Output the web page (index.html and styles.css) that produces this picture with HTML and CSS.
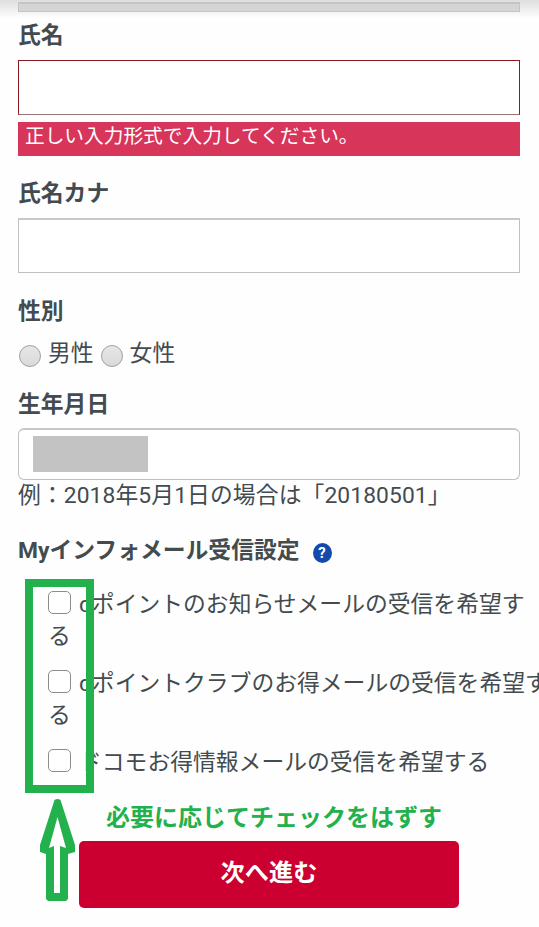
FILE: index.html
```html
<!DOCTYPE html>
<html lang="ja">
<head>
    <meta charset="UTF-8">
    <meta name="viewport" content="width=device-width, initial-scale=1.0">
    <title>お客様情報の入力</title>
    <link rel="stylesheet" href="styles.css">
</head>
<body>
    <div class="top-shade"><div class="top-bar"></div></div>
    <form class="container">
        <label class="title" for="name">氏名</label>
        <input type="text" id="name" class="text-box invalid">
        <div class="error">正しい入力形式で入力してください。</div>

        <label class="title title-kana" for="kana">氏名カナ</label>
        <input type="text" id="kana" class="text-box">

        <div class="title title-gender">性別</div>
        <div class="radios">
            <input type="radio" name="gender" id="male">
            <label for="male">男性</label>
            <input type="radio" name="gender" id="female">
            <label for="female">女性</label>
        </div>

        <div class="title title-birth">生年月日</div>
        <div class="text-box birth-box"><span class="mask"></span></div>
        <div class="hint">例：2018年5月1日の場合は「20180501」</div>

        <div class="title title-mail">
            <span>Myインフォメール受信設定</span>
            <span class="help">?</span>
        </div>
        <div class="mail-list">
            <label class="mail-item"><input type="checkbox">dポイントのお知らせメールの受信を希望す<br>る</label>
            <label class="mail-item"><input type="checkbox">dポイントクラブのお得メールの受信を希望す<br>る</label>
            <label class="mail-item"><input type="checkbox">ドコモお得情報メールの受信を希望する</label>
        </div>

        <div class="note">必要に応じてチェックをはずす</div>
        <button type="button" class="next">次へ進む</button>
    </form>

    <!-- callout over the checkboxes -->
    <div class="mark-frame"></div>
    <svg class="mark-arrow" width="36" height="104" viewBox="0 0 36 104">
        <path d="M14.5 2 Q17.5 0 20.5 2 L35 47 V54 L28 56 V101 L26 103 H8 L6 101 V56 L0 54 V47 Z" fill="#22b14c"/>
        <path d="M17.5 19 L9 50 L14 48 V95 H20 V48 L26 50 Z" fill="#fff"/>
    </svg>
</body>
</html>
```
FILE: styles.css
```css
* {
    box-sizing: border-box;
}
body {
    position: relative;
    width: 539px;
    height: 927px;
    margin: 0;
    overflow: hidden;
    background: #fefefe;
    color: #434b4f;
    font-family: Roboto, "Noto Sans CJK JP", sans-serif;
    font-size: 22.8px;
    line-height: 32px;
}
.top-shade {
    height: 18px;
    padding: 2px 19px 0 18px;
    background: linear-gradient(#dedede, #fefefe);
}
.top-bar {
    height: 10px;
    background: #d5d5d5;
    border: 1px solid #c3c4c4;
    border-top-width: 2px;
}
.container {
    display: flex;
    flex-direction: column;
    padding: 0 19px 0 18px;
}
.title {
    height: 32px;
    margin-bottom: 10px;
    font-weight: bold;
    line-height: 35px;
}
.text-box {
    width: 502px;
    height: 55px;
    border: 1px solid #c0c0c0;
    border-top: 2px solid #c8c8c8;
    border-radius: 0;
    background: #fff;
}
.invalid {
    border: 1px solid #8a1a1c;
    border-bottom-color: #967572;
}
.error {
    height: 34px;
    margin-top: 7px;
    padding-left: 7px;
    background: #d8355b;
    color: #fff;
    font-size: 19.7px;
    line-height: 30px;
}
.title-kana {
    margin-top: 20px;
}
.title-gender {
    margin-top: 21px;
}
.radios {
    display: flex;
    height: 32px;
    line-height: 36px;
}
.radios label {
    margin: 0 6px 0 7px;
}
.radios input {
    appearance: none;
    width: 22px;
    height: 22px;
    margin: 9px 0 0 1px;
    border: 1px solid #a0a0a0;
    border-radius: 50%;
    background: linear-gradient(#e6e6e6, #dadada);
}
.title-birth {
    margin-top: 19px;
    margin-bottom: 9px;
}
.birth-box {
    height: 52px;
    padding: 6px 14px;
    border-radius: 6px;
}
.mask {
    display: block;
    width: 115px;
    height: 36px;
    background: #c3c3c3;
}
.hint {
    height: 32px;
    margin-top: -1px;
    line-height: 34px;
    letter-spacing: 0.1px;
}
.title-mail {
    display: flex;
    margin-top: 22px;
}
.help {
    width: 19px;
    height: 20px;
    margin: 10px 0 0 13px;
    border-radius: 50%;
    background: #134aac;
    color: #fff;
    font-size: 15px;
    line-height: 20px;
    text-align: center;
}
.mail-list {
    display: flex;
    flex-direction: column;
    gap: 15px;
    margin-top: 14px;
    padding-left: 30px;
}
.mail-item {
    white-space: nowrap;
}
.mail-item input {
    appearance: none;
    width: 23px;
    height: 23px;
    margin: 2px 8px 0 0;
    border: 1px solid #8c8c8c;
    border-radius: 5px;
    background: #fff;
    vertical-align: top;
}
.note {
    margin: 23px 0 7px 88px;
    color: #22b14c;
    font-size: 24px;
    font-weight: bold;
}
.next {
    width: 380px;
    height: 67px;
    margin-left: 61px;
    padding: 0 0 9px;
    border: none;
    border-radius: 5px;
    background: #cc0030;
    color: #fff;
    font-family: inherit;
    font-size: 24.2px;
    font-weight: bold;
}
.mark-frame {
    position: absolute;
    left: 25px;
    top: 579px;
    width: 69px;
    height: 214px;
    border: 8px solid #22b14c;
}
.mark-arrow {
    position: absolute;
    left: 40px;
    top: 798px;
}
```
